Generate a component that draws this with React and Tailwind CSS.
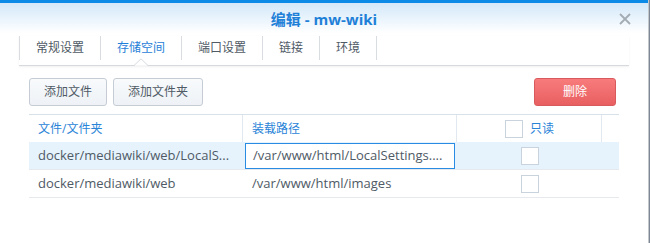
import React from 'react';

const tabs = ['常规设置', '存储空间', '端口设置', '链接', '环境'];

const rows = [
    { src: 'docker/mediawiki/web/LocalS...', dst: '/var/www/html/LocalSettings....', selected: true },
    { src: 'docker/mediawiki/web', dst: '/var/www/html/images', selected: false },
];

function CloseIcon() {
    return (
        <svg width="12" height="12" viewBox="0 0 12 12">
            <path d="M1 1 L11 11 M11 1 L1 11" stroke="#a3abb3" strokeWidth="1.8" fill="none" />
        </svg>
    );
}

function Box() {
    return <div className="w-[18px] h-[18px] border border-[#c9d3dd] bg-white" />;
}

export default function App() {
    return (
        <div className="w-[650px] h-[243px] flex bg-white overflow-hidden font-['Open_Sans','Noto_Sans_CJK_SC',sans-serif] text-[13px] text-[#4f5a65]">
            <div className="w-[648px] flex flex-col">
                <div className="h-[3px] bg-[#0b8ae8]" />
                <div className="h-[30px] relative flex items-center justify-center bg-gradient-to-b from-[#d3e8f9] to-white">
                    <span className="text-[15px] font-bold text-[#1f80d8] pt-[2px]">编辑 - mw-wiki</span>
                    <div className="absolute right-[17px] top-[10px]">
                        <CloseIcon />
                    </div>
                </div>

                {/* tabs */}
                <div className="mt-[3px] ml-[19px] w-[610px] h-[30px] relative border-b border-[#d6dadf] shadow-[0_1px_2px_rgba(0,0,0,0.06)]">
                    <div className="flex h-[24px] border-l border-[#d9dde2]">
                        {tabs.map((t, i) => (
                            <div
                                key={t}
                                className={`px-[16px] h-full flex items-center border-r border-[#d9dde2] text-[12px] ${i === 1 ? 'text-[#1f80d8]' : 'text-[#4f5a65]'}`}
                            >
                                {t}
                            </div>
                        ))}
                    </div>
                    <svg className="absolute left-[115px] bottom-[-1px]" width="14" height="8" viewBox="0 0 14 8">
                        <path d="M0 7.5 L7 0.8 L14 7.5" fill="white" stroke="#d6dadf" strokeWidth="1" />
                        <rect x="1" y="7.5" width="12" height="1" fill="white" />
                    </svg>
                </div>

                {/* toolbar */}
                <div className="mt-[12px] ml-[29px] w-[587px] flex items-center">
                    <button className="h-[28px] w-[78px] rounded-[3px] border border-[#c5ccd4] bg-gradient-to-b from-[#f8fafc] to-[#eef2f6] text-[12px] text-[#4f5a65]">
                        添加文件
                    </button>
                    <button className="ml-[6px] h-[28px] w-[90px] rounded-[3px] border border-[#c5ccd4] bg-gradient-to-b from-[#f8fafc] to-[#eef2f6] text-[12px] text-[#4f5a65]">
                        添加文件夹
                    </button>
                    <button className="ml-auto h-[28px] w-[82px] rounded-[3px] border border-[#d95a5c] bg-gradient-to-b from-[#f87b7c] to-[#e85f61] text-[12px] text-white">
                        删除
                    </button>
                </div>

                {/* table */}
                <div className="mt-[8px] ml-[29px] w-[590px] border-t border-[#d8e0e8]">
                    <div className="grid grid-cols-[214px_214px_145px_17px] h-[27px] text-[#2a84d8] text-[12px]">
                        <div className="flex items-center pl-[9px] border-r border-[#e1e8ef]">文件/文件夹</div>
                        <div className="flex items-center pl-[9px] border-r border-[#e1e8ef]">装载路径</div>
                        <div className="flex items-center justify-center gap-[7px] border-r border-[#e1e8ef] pl-[1px]">
                            <Box />
                            <span>只读</span>
                        </div>
                        <div />
                    </div>
                    {rows.map((r) => (
                        <div
                            key={r.src}
                            className={`grid grid-cols-[214px_214px_145px_17px] h-[28px] border-b border-[#e6eaee] ${r.selected ? 'bg-[#e6f3fd]' : 'bg-white'}`}
                        >
                            <div className="flex items-center pl-[9px] whitespace-nowrap overflow-hidden">{r.src}</div>
                            {r.selected ? (
                                <div className="flex items-center pl-[2px] pt-[1px]">
                                    <div className="w-[210px] h-[26px] border border-[#2a8be2] bg-white flex items-center pl-[7px] whitespace-nowrap overflow-hidden">
                                        {r.dst}
                                    </div>
                                </div>
                            ) : (
                                <div className="flex items-center pl-[9px] whitespace-nowrap overflow-hidden">{r.dst}</div>
                            )}
                            <div className="flex items-center justify-center pl-[1px]">
                                <Box />
                            </div>
                            <div />
                        </div>
                    ))}
                </div>
            </div>
            <div className="w-[2px] flex">
                <div className="w-px bg-[#c3c8cd]" />
                <div className="w-px bg-[#7d8a96]" />
            </div>
        </div>
    );
}
